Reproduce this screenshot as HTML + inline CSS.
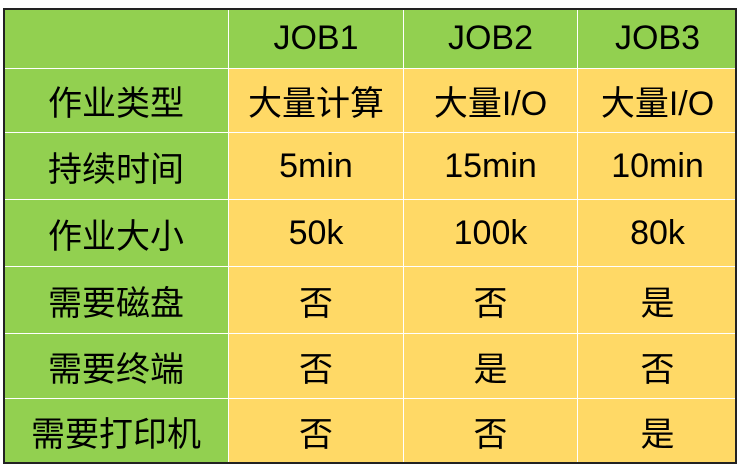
<!DOCTYPE html>
<html><head><style>
body{margin:0;width:747px;height:473px;background:#fff;position:relative;overflow:hidden}
.t{position:absolute;left:3px;top:8px;width:734px;height:456px;border:2px solid #222;box-sizing:border-box;z-index:5}
.c{position:absolute;display:flex;align-items:center;justify-content:center;font-family:"Liberation Sans","Noto Sans CJK SC",sans-serif;font-size:34px;color:#000;box-sizing:border-box;border-right:2px solid #fff;border-bottom:2px solid #fff}
.g{background:#92d050}.y{background:#ffd966}
</style></head><body>
<div class="t"></div>
<div id="w"></div>
<script>
var cols=[4,229,404,578,736],rows=[9,69,133,200,267,334,399,463];
var d=[["","JOB1","JOB2","JOB3"],["作业类型","大量计算","大量I/O","大量I/O"],["持续时间","5min","15min","10min"],["作业大小","50k","100k","80k"],["需要磁盘","否","否","是"],["需要终端","否","是","否"],["需要打印机","否","否","是"]];
var h="";
for(var r=0;r<7;r++)for(var c=0;c<4;c++){
var g=(r==0||c==0)?"g":"y";
var br=c==3?"border-right:none;":"",bb=r==6?"border-bottom:none;":"";
h+='<div class="c '+g+'" style="left:'+cols[c]+'px;top:'+rows[r]+'px;width:'+(cols[c+1]-cols[c]+1)+'px;height:'+(rows[r+1]-rows[r]+1)+'px;'+br+bb+'">'+d[r][c]+'</div>';}
document.getElementById("w").innerHTML=h;
</script>
</body></html>
